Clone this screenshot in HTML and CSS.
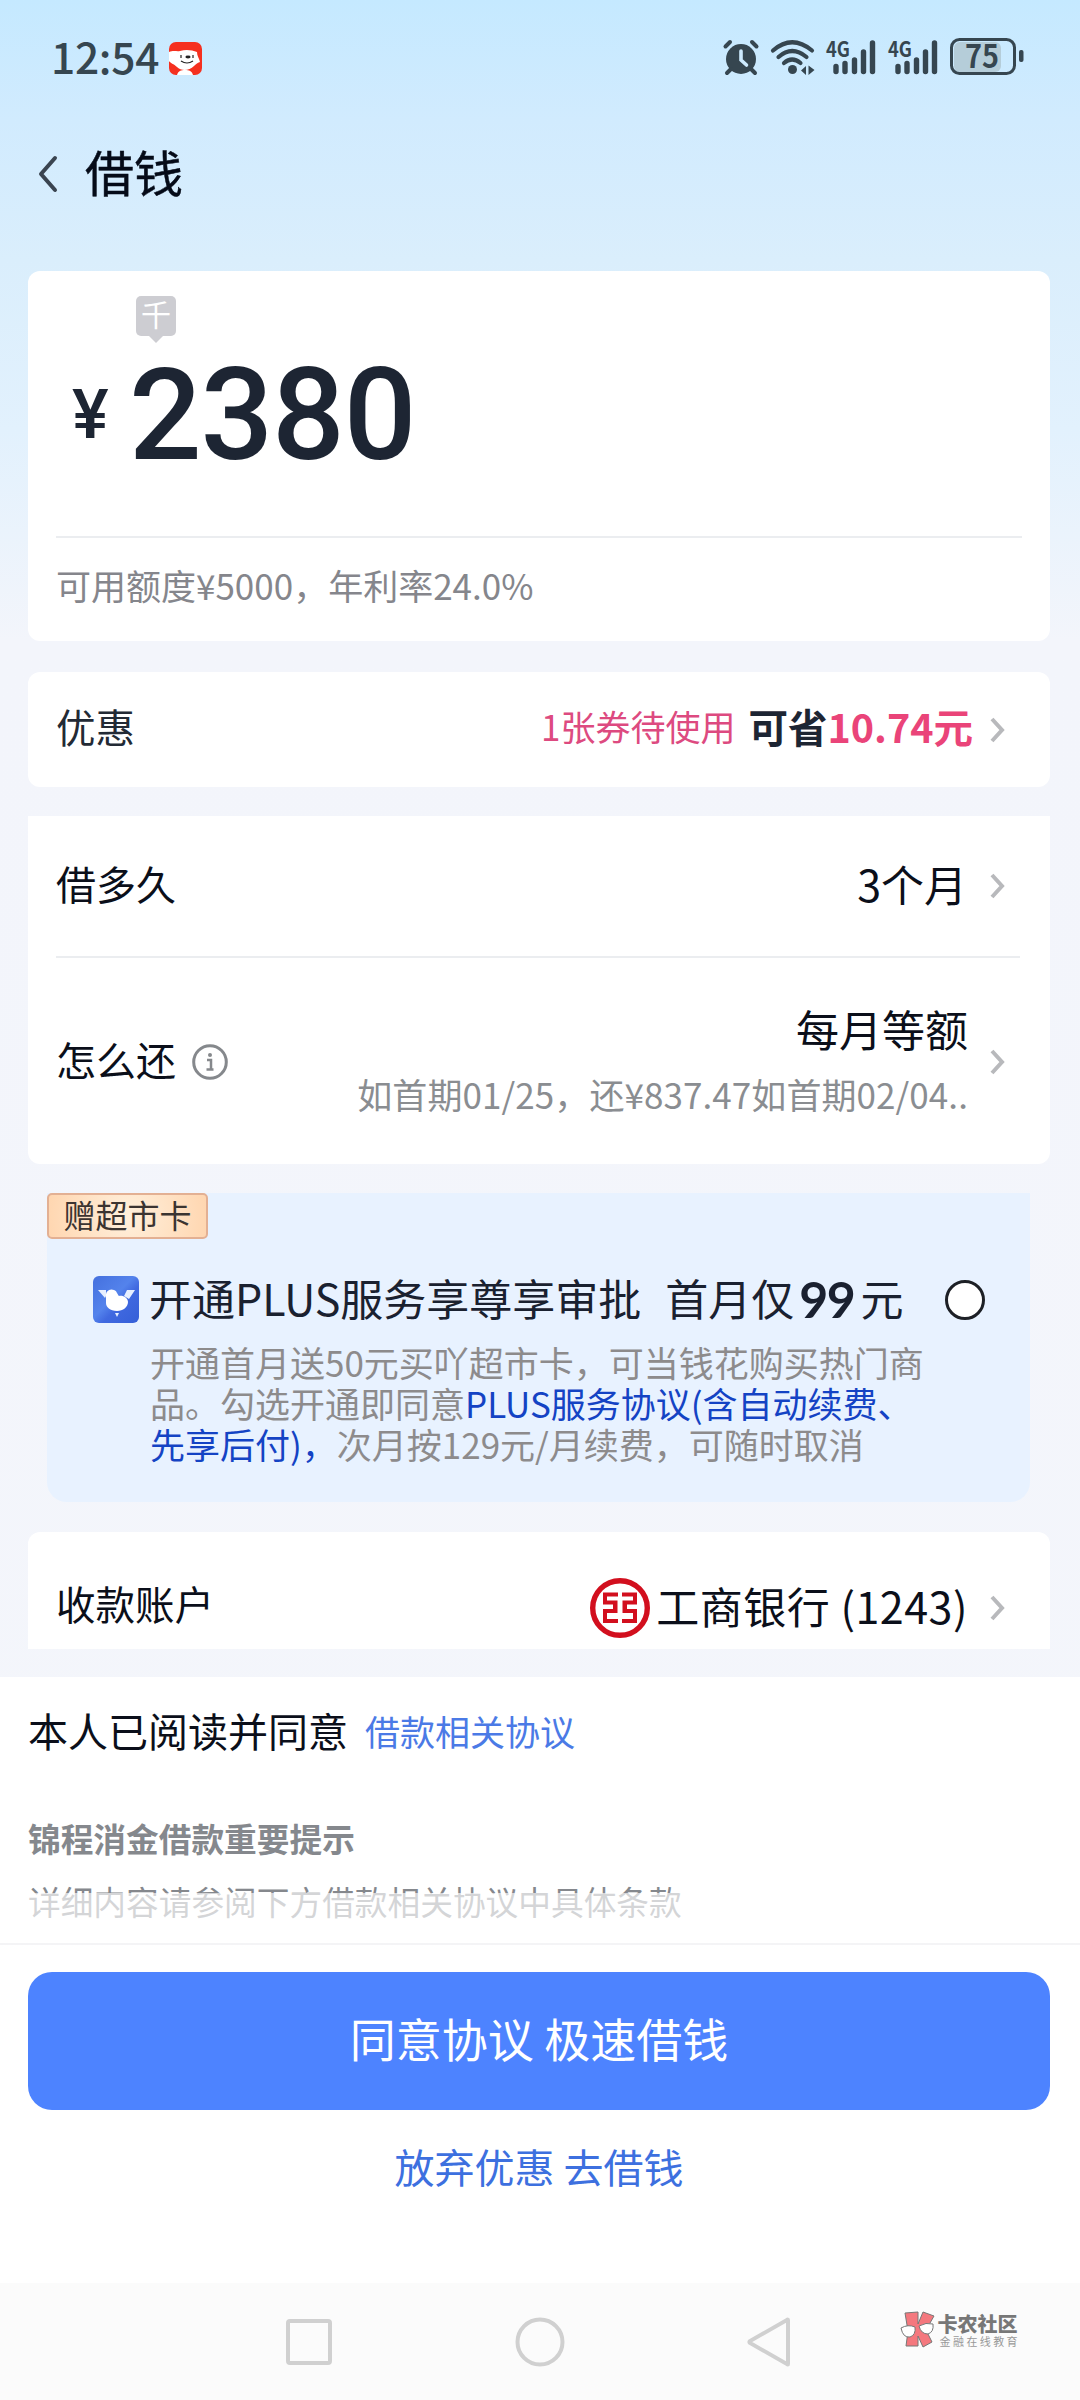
FILE: index.html
```html
<!DOCTYPE html>
<html lang="zh-CN">
<head>
<meta charset="utf-8">
<title>借钱</title>
<link rel="stylesheet" href="styles.css">
</head>
<body>
<div class="screen">
  <div class="status">
    <span class="clock">12:54</span>
    <svg class="app" width="33" height="33" viewBox="0 0 33 33"><rect width="33" height="33" rx="7" fill="#f5301f"/><path d="M0 10 C5 8 8 10 11 9 C17 7 23 8 28 10 C28 14 30 16 31 20 C28 21 27 22 25 24 C20 29 12 29 8 25 C5 22 1 21 0 19Z" fill="#fff"/><path d="M8 33 C9 29 12 28 16 28 C20 28 23 29 24 33Z" fill="#fff"/><path d="M12 13v3M24 13v3M12 19q6 4 12 0" stroke="#222" stroke-width="1.2" fill="none"/><ellipse cx="19" cy="15" rx="2.6" ry="1.4" fill="#222"/></svg>
    <div class="status-icons">
      <svg class="alarm" width="38" height="38" viewBox="0 0 38 38" fill="none" stroke="#364650" stroke-width="4" stroke-linecap="round"><circle cx="19" cy="21" r="15" fill="#364650" stroke="none"/><path d="M3.500 8.500L8 4M34.500 8.500L30 4M9 31l-4 4M29 31l4 4"/><path d="M19 13v9l5.500 5" stroke="#cdeafe" stroke-width="3.600"/></svg>
      <svg class="wifi" width="46" height="38" viewBox="0 0 46 38" fill="none" stroke="#364650" stroke-width="4.200" stroke-linecap="round"><path d="M3 12.500Q22 -4 42 12.500M8.500 19Q22 7 36.500 19M14 25Q22 18 30.500 25"/><circle cx="22.500" cy="31.500" r="4.500" fill="#364650" stroke="none"/><path d="M36 28v9l-5-4.500zM38.500 27.500l6 4.500-6 5z" fill="#364650" stroke="none"/></svg>
      <svg class="signal" width="52" height="38" viewBox="0 0 52 38"><text x="0" y="19" font-size="21" textLength="24" lengthAdjust="spacingAndGlyphs" class="net">4G</text><g stroke="#364650" stroke-width="5.400" stroke-linecap="round"><path d="M10 28.500v5M19 25.500v8M28.500 22v11.500M37.500 14v19.500M46.500 5v28.500"/></g></svg>
      <svg class="signal" width="52" height="38" viewBox="0 0 52 38"><text x="0" y="19" font-size="21" textLength="24" lengthAdjust="spacingAndGlyphs" class="net">4G</text><g stroke="#364650" stroke-width="5.400" stroke-linecap="round"><path d="M10 28.500v5M19 25.500v8M28.500 22v11.500M37.500 14v19.500M46.500 5v28.500"/></g></svg>
      <svg width="74" height="38" viewBox="0 0 74 38"><rect x="4" y="4" width="47" height="30" rx="6" fill="#b5cdd9"/><rect x="1.500" y="1.500" width="63" height="34" rx="8" fill="none" stroke="#364650" stroke-width="3"/><rect x="69" y="12" width="4.500" height="12" rx="2" fill="#364650"/><text x="15" y="30" font-size="32" textLength="34" lengthAdjust="spacingAndGlyphs" class="net">75</text></svg>
    </div>
  </div>

  <header class="head">
    <svg width="20" height="38" viewBox="0 0 20 38" fill="none" stroke="#3a4450" stroke-width="4" stroke-linecap="round" stroke-linejoin="round"><path d="M17 3L3 19l14 16"/></svg>
    <h1>借钱</h1>
  </header>

  <section class="card amount">
    <div class="unit">千</div>
    <div class="money"><span class="yen">¥</span><span class="num">2380</span></div>
    <p class="quota">可用额度¥5000，年利率24.0%</p>
  </section>

  <section class="card coupon row">
    <span class="label dim">优惠</span>
    <span class="pending">1张券待使用</span>
    <span class="save">可省<em>10.74元</em></span>
    <svg class="arrow" width="16" height="28" viewBox="0 0 16 28"><path d="M3 3l10 11L3 25"/></svg>
  </section>

  <section class="card terms">
    <div class="row duration">
      <span class="label">借多久</span>
      <span class="value">3个月</span>
      <svg class="arrow" width="16" height="28" viewBox="0 0 16 28"><path d="M3 3l10 11L3 25"/></svg>
    </div>
    <div class="row repay">
      <span class="label">怎么还</span>
      <svg class="info" width="36" height="36" viewBox="0 0 36 36"><circle cx="18" cy="18" r="16.300" fill="none" stroke="#85888c" stroke-width="3"/><circle cx="18" cy="11" r="2" fill="#85888c"/><path d="M15 16h4v9M14.500 25.500h7" fill="none" stroke="#85888c" stroke-width="2.500"/></svg>
      <div class="plan"><span class="value">每月等额</span><span class="note">如首期01/25，还¥837.47如首期02/04..</span></div>
      <svg class="arrow" width="16" height="28" viewBox="0 0 16 28"><path d="M3 3l10 11L3 25"/></svg>
    </div>
  </section>

  <section class="plus">
    <div class="tag">赠超市卡</div>
    <div class="offer">
      <svg width="46" height="47" viewBox="0 0 46 47"><defs><linearGradient id="b" x1="0" y1="0" x2="1" y2="1"><stop offset="0" stop-color="#4470de"/><stop offset=".45" stop-color="#5483ec"/><stop offset=".6" stop-color="#4069e0"/><stop offset="1" stop-color="#355fd8"/></linearGradient></defs><rect width="46" height="47" rx="6" fill="url(#b)"/><path d="M5 14h8v6l-1 2zM34 14h8l-6 9-5-3z" fill="#e6efff"/><path d="M13 21C12 15 17 12 21 14C24 15 24 18 26 20C30 19 35 22 35 26C35 31 30 35 24 35C17 35 13 31 13 27Z" fill="#fff"/><path d="M22 37h4l-2 4z" fill="#e6efff"/></svg>
      <span class="offer-name">开通PLUS服务享尊享审批</span>
      <span class="price">首月仅</span><b>99</b><span class="price">元</span>
      <i class="radio"></i>
    </div>
    <p class="desc">开通首月送50元买吖超市卡，可当钱花购买热门商<br>品。勾选开通即同意<a>PLUS服务协议(含自动续费、<br>先享后付)，</a>次月按129元/月续费，可随时取消</p>
  </section>

  <section class="card row account">
    <span class="label">收款账户</span>
    <svg class="bank" width="60" height="60" viewBox="0 0 60 60" fill="none" stroke="#d20f1e"><circle cx="30" cy="30" r="27.300" stroke-width="5.400"/><path d="M28 16.500H15V24.500H25.500V33H15V43H28M32 16.500H45V24.500H34.500V33H45V43H32M25 24.500V33M35 24.500V33" stroke-width="4"/></svg>
    <span class="value">工商银行 (1243)</span>
    <svg class="arrow" width="16" height="28" viewBox="0 0 16 28"><path d="M3 3l10 11L3 25"/></svg>
  </section>

  <section class="agree">
    <p class="consent">本人已阅读并同意<a>借款相关协议</a></p>
    <p class="warn">锦程消金借款重要提示</p>
    <p class="detail">详细内容请参阅下方借款相关协议中具体条款</p>
  </section>

  <footer class="actions">
    <div class="btn">同意协议 极速借钱</div>
    <div class="skip">放弃优惠 去借钱</div>
  </footer>

  <nav class="nav">
    <svg width="50" height="50" viewBox="0 0 50 50"><rect x="4" y="4" width="42" height="42" rx="2"/></svg>
    <svg width="50" height="50" viewBox="0 0 50 50"><circle cx="25" cy="25" r="22.500"/></svg>
    <svg width="50" height="50" viewBox="0 0 50 50"><path d="M42 3v44q0 1-1 0L4 26q-1-1 0-2L41 3q1-1 1 0z"/></svg>
    <div class="mark">
      <svg width="36" height="38" viewBox="0 0 36 38" stroke="#777" stroke-width="1"><path d="M5 2L18 1L18 13L23 1L34 5L26 19L32 31L23 36L18 25L18 35L6 35L8 20Z" fill="#f4787e"/><path d="M1 17q7-4 14-1q1 8-5 10q-7 1-9-9zM19 15q7-4 14-2q1 8-5 10q-7 0-9-8z" fill="#fff"/></svg>
      <div class="mark-text"><strong>卡农社区</strong><small>金融在线教育</small></div>
    </div>
  </nav>
</div>
</body>
</html>
```
FILE: styles.css
```css
* { box-sizing: border-box; }
body { margin: 0; font-family: "Noto Sans CJK SC", sans-serif; color: #0b0f1a; }
h1, p { margin: 0; font-weight: 400; }
em, i { font-style: normal; }
svg { display: block; flex: none; overflow: visible; }
.screen {
  width: 1080px; height: 2400px; overflow: hidden; display: flex; flex-direction: column; white-space: nowrap;
  background: linear-gradient(180deg, #c5e9ff 0, #d1ebfe 120px, #daeefc 260px, #e2f1fd 430px, #f3f5fb 640px, #f4f6fb 100%);
}

.status { height: 116px; padding: 0 56px 0 51px; display: flex; align-items: center; }
.clock { font-size: 42.500px; line-height: 58px; font-weight: 500; color: #364650; letter-spacing: -0.3px; margin-top: -5px; }
.app { margin-left: 10px; }
.status-icons { margin-left: auto; margin-top: -3px; display: flex; align-items: center; }
.alarm { margin-right: 10px; }
.wifi { margin-right: 10px; }
.signal { margin-right: 10px; }
.net { font-family: "Noto Sans CJK SC", sans-serif; font-weight: 700; fill: #364650; }

.head { height: 155px; padding: 0 38px 39px; display: flex; align-items: center; gap: 27px; }
.head h1 { font-size: 49px; line-height: 60px; margin-top: -6px; color: #050b18; -webkit-text-stroke: 0.5px #050b18; }

.card { margin: 0 30px 0 28px; background: #fff; border-radius: 12px; }
.row { display: flex; align-items: center; padding: 0 45px 0 28px; }
.label, .value { line-height: 56px; }
.label { font-size: 40px; margin-top: -6px; }
.dim { color: #232a35; font-size: 39.500px; margin-top: -8px; }
.value { font-size: 43px; }
.arrow { fill: none; stroke: #b8b9bc; stroke-width: 4; }

.amount { height: 370px; padding: 25px 28px 0; display: flex; flex-direction: column; }
.unit { position: relative; width: 40px; height: 40px; margin-left: 80px; border-radius: 5px; background: #cdcdd2; color: #fff; font-size: 30px; line-height: 35px; text-align: center; }
.unit::after { content: ""; position: absolute; left: 13px; top: 40px; border: 7px solid transparent; border-top-color: #cdcdd2; border-bottom: 0; }
.money { height: 202px; padding-top: 2px; border-bottom: 2px solid #ebedf0; display: flex; font-family: Roboto, sans-serif; font-weight: 500; color: #1d2533; }
.yen { width: 73px; padding-left: 16px; font-size: 69px; line-height: 154px; }
.num { font-size: 128px; line-height: 155px; letter-spacing: -1.200px; }
.quota { font-size: 35px; line-height: 52px; margin-top: 21px; color: #85868c; }

.coupon { height: 115px; margin-top: 31px; }
.pending { margin-left: auto; font-size: 35px; color: #dd4a80; margin-top: -8px; }
.save { margin: -9px 16px 0 13px; font-size: 39.5px; font-weight: 700; color: #1d2533; }
.save em { color: #ea4479; }

.terms { height: 348px; margin-top: 29px; border-radius: 0 0 12px 12px; }
.duration { height: 140px; }
.duration .value { margin: -6px 22px 0 auto; }
.repay { height: 208px; position: relative; padding-top: 3px; }
.repay::before { content: ""; position: absolute; left: 28px; right: 30px; top: 0; border-top: 2px solid #ebedf0; }
.info { margin-left: 16px; }
.plan { margin: -4px 21px 0 auto; display: flex; flex-direction: column; align-items: flex-end; }
.note { font-size: 35px; line-height: 52px; margin-top: 12px; color: #8a8d91; letter-spacing: 0.080px; }

.plus { height: 309px; margin: 29px 50px 0 47px; background: #e8f2ff; border-radius: 0 0 20px 20px; }
.tag { width: 161px; height: 46px; border: 2px solid #e3b093; border-radius: 5px; background: radial-gradient(circle at 50% 50%, #fff0dc, #ffd6b0); font-size: 32px; line-height: 39px; text-align: center; color: #3b3431; }
.offer { display: flex; align-items: center; height: 47px; margin: 37px 0 0 46px; font-size: 43px; line-height: 47px; color: #1a2130; }
.offer-name { margin: -5px 24px 0 10px; }
.price { margin-top: -5px; }
.offer b { font-family: Lato, sans-serif; font-size: 50px; font-weight: 700; letter-spacing: -1.500px; margin: -1px 6px 0 5px; }
.radio { width: 40px; height: 40px; margin-left: auto; margin-right: 45px; border: 3px solid #1d2026; border-radius: 50%; background: #fff; }
.desc { margin: 18px 0 0 103px; font-size: 35px; line-height: 41px; color: #8d8b8c; }
.desc a { color: #1443c4; }

.account { height: 117px; margin-top: 30px; border-radius: 12px 12px 0 0; padding-top: 35px; flex: none; }
.account .label { margin-top: -10px; font-size: 39.500px; }
.bank { margin-left: auto; }
.account .value { margin: -6px 21px 0 6px; letter-spacing: 0.500px; }

.agree { height: 268px; margin-top: 28px; padding: 26px 28px 0; background: #fff; border-bottom: 2px solid #f4f4f6; flex: none; }
.consent { font-size: 40px; line-height: 54px; }
.consent a { position: relative; top: -1px; margin-left: 17px; font-size: 35px; color: #4b7ae6; }
.warn { margin-top: 55px; font-size: 32.700px; line-height: 48px; font-weight: 700; color: #85888d; }
.detail { position: relative; width: 680px; margin-top: 15px; font-size: 32.700px; line-height: 48px; color: #85888d; }
.detail::after { content: ""; position: absolute; inset: 16px 0 0 0; background: rgba(255, 255, 255, 0.65); }

.actions { height: 338px; padding: 27px 30px 0 28px; background: #fff; flex: none; }
.btn { height: 138px; border-radius: 24px; background: #4d83ff; color: #fff; font-size: 46px; line-height: 130px; text-align: center; }
.skip { margin-top: 27px; font-size: 40px; line-height: 59px; text-align: center; color: #3d70df; }

.nav { flex: none; height: 117px; padding: 0 60px 0 284px; display: flex; align-items: center; background: #fbfbfb; }
.nav > svg { fill: none; stroke: #d0d0d0; stroke-width: 4; margin-right: 181px; }
.nav > svg:nth-child(3) { margin-right: 0; }
.mark { margin-left: auto; margin-bottom: 24px; display: flex; align-items: center; gap: 2px; }
.mark-text { display: flex; flex-direction: column; color: #777; }
.mark strong { font-size: 20px; line-height: 22px; font-weight: 900; }
.mark small { font-size: 11px; line-height: 12px; letter-spacing: 2.400px; padding-left: 2px; color: #999; }
```
